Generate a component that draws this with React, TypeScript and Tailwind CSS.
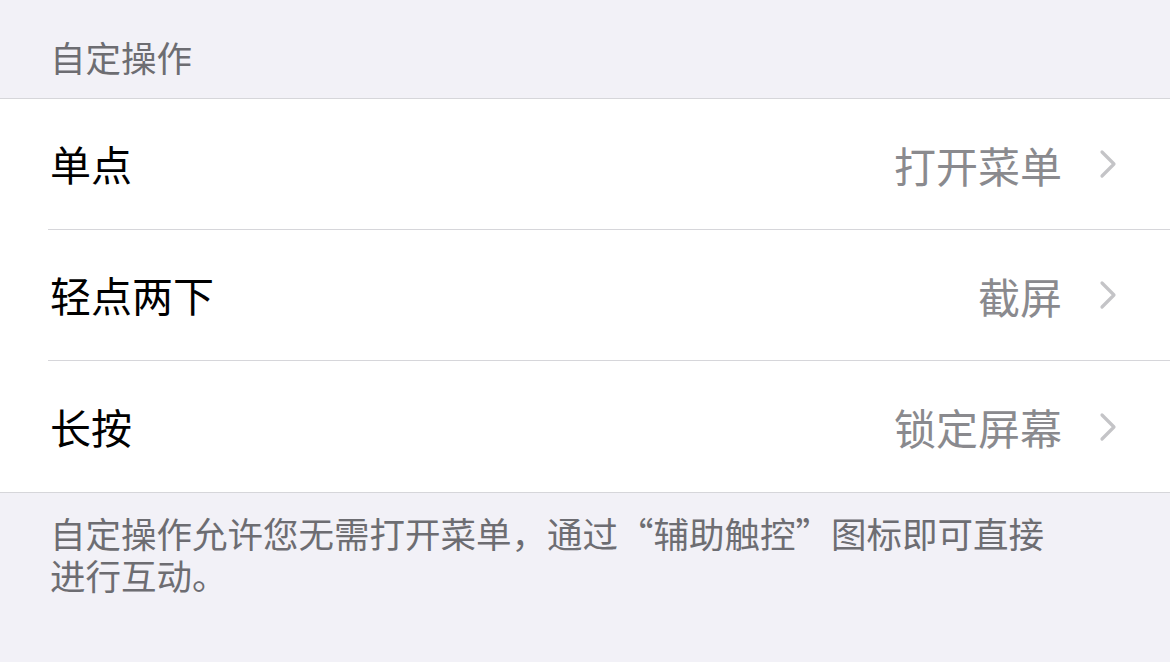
import React from 'react'

const rows = [
  { label: '单点', value: '打开菜单' },
  { label: '轻点两下', value: '截屏' },
  { label: '长按', value: '锁定屏幕' },
]

function Chevron() {
  return (
    <svg width="20" height="30" viewBox="0 0 20 30" fill="none" className="ml-[36px] mr-[52px]">
      <path d="M4 3 L16 15 L4 27" stroke="#c4c4c7" strokeWidth="3.2" strokeLinecap="round" strokeLinejoin="round" />
    </svg>
  )
}

export default function App() {
  return (
    <div
      className="w-[1170px] h-[662px] bg-[#f2f1f7] overflow-hidden"
      style={{ fontFamily: '"Noto Sans CJK SC", "Noto Sans", sans-serif' }}
    >
      <div className="h-[98px] flex items-center pl-[50px] pt-[16px] text-[35.5px] text-[#6d6d72]">自定操作</div>
      <div className="bg-white border-y border-[#d6d6da]">
        {rows.map((r, i) => (
          <div key={r.label} className="pl-[48px]">
            <div className={`h-[131px] flex items-center ${i < rows.length - 1 ? 'border-b border-[#d6d6da]' : ''}`}>
              <span className="pl-[2px] text-[41px] text-black flex-1">{r.label}</span>
              <span className="text-[42px] text-[#8a8a8e]">{r.value}</span>
              <Chevron />
            </div>
          </div>
        ))}
      </div>
      <div className="pl-[50px] pr-[80px] pt-[19px] text-[35.5px] leading-[42px] text-[#6d6d72]">
        自定操作允许您无需打开菜单，通过“辅助触控”图标即可直接
        <br />
        进行互动。
      </div>
    </div>
  )
}
